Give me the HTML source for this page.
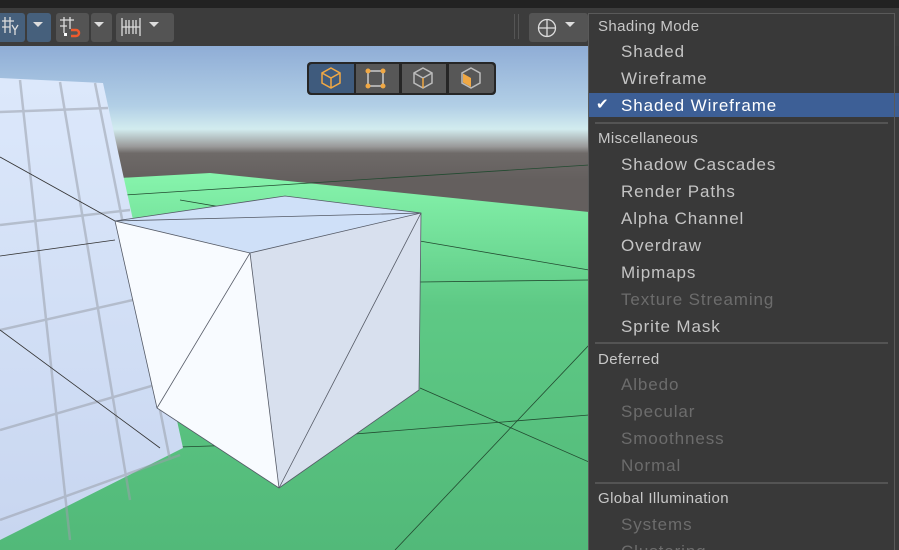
<!DOCTYPE html>
<html><head><meta charset="utf-8"><style>
*{margin:0;padding:0;box-sizing:border-box}
html,body{width:899px;height:550px;overflow:hidden}
body{background:#3c3c3c;position:relative;font-family:"Liberation Sans",sans-serif}
.abs{position:absolute}
.btn{position:absolute;top:13px;height:29px;border-radius:3px;background:#545454}
.menu{position:absolute;left:588px;top:13px;width:307px;height:537px;background:#393939;border:1px solid #5a5a5a;border-bottom:none;overflow:hidden}
.h{position:absolute;left:9px;font-size:15px;letter-spacing:0.4px;color:#c8c8c8;white-space:nowrap}
.i{position:absolute;left:32px;font-size:17px;letter-spacing:0.9px;color:#c4c4c4;white-space:nowrap}
.d{color:#6c6c6c}
.sep{position:absolute;left:6px;right:6px;height:2px;background:#545454}
</style></head><body>
<div class="abs" style="left:0;top:0;width:899px;height:8px;background:#222"></div>
<svg class="abs" style="left:0;top:46px" width="589" height="504" viewBox="0 46 589 504">
<defs>
<linearGradient id="sky" x1="0" y1="46" x2="0" y2="180" gradientUnits="userSpaceOnUse">
<stop offset="0" stop-color="#8fadd6"/><stop offset="0.45" stop-color="#b2cfe6"/><stop offset="0.62" stop-color="#d2ecef"/><stop offset="0.75" stop-color="#9a9a9a"/><stop offset="0.8" stop-color="#6e6a68"/><stop offset="1" stop-color="#645f5e"/></linearGradient>
<linearGradient id="gr" x1="0" y1="175" x2="0" y2="550" gradientUnits="userSpaceOnUse">
<stop offset="0" stop-color="#86f4ac"/><stop offset="0.35" stop-color="#5ec985"/><stop offset="1" stop-color="#52b979"/></linearGradient>
<linearGradient id="pl" x1="0" y1="80" x2="0" y2="540" gradientUnits="userSpaceOnUse">
<stop offset="0" stop-color="#dce8fb"/><stop offset="1" stop-color="#c8d6f0"/></linearGradient>
</defs>
<rect x="0" y="46" width="589" height="504" fill="url(#sky)"/>
<polygon points="120,178 210,173 589,212 589,550 0,550 0,200" fill="url(#gr)"/>
<g stroke="#224a30" stroke-width="0.8" fill="none">
<line x1="125" y1="195" x2="589" y2="165"/><line x1="180" y1="200" x2="589" y2="270"/><line x1="420" y1="282" x2="589" y2="280"/>
<line x1="420" y1="388" x2="589" y2="462"/><line x1="355" y1="434" x2="589" y2="415"/><line x1="395" y1="550" x2="589" y2="345"/>
<line x1="180" y1="447" x2="240" y2="445"/>
</g>
<polygon points="0,78 103,83 183,448 0,540" fill="url(#pl)"/>
<g stroke="#9aa0ab" stroke-width="2.5" opacity="0.55" fill="none">
<line x1="0" y1="112" x2="108" y2="108"/><line x1="0" y1="225" x2="130" y2="210"/><line x1="0" y1="330" x2="155" y2="295"/><line x1="0" y1="430" x2="172" y2="380"/><line x1="0" y1="520" x2="180" y2="455"/>
<line x1="20" y1="80" x2="70" y2="540"/><line x1="60" y1="82" x2="130" y2="500"/><line x1="95" y1="83" x2="170" y2="460"/>
</g>
<g stroke="#333" stroke-width="0.8" fill="none">
<line x1="0" y1="157" x2="115" y2="221"/><line x1="0" y1="330" x2="160" y2="448"/><line x1="0" y1="256" x2="115" y2="240"/>
</g>
<polygon points="115,221 285,196 421,213 419,390 279,488 157,408" fill="#eef4fb"/>
<polygon points="115,221 285,196 421,213 250,253" fill="#cfe0f8"/>
<polygon points="250,253 421,213 419,390 279,488" fill="#d8e0ee"/>
<polygon points="115,221 250,253 279,488 157,408" fill="#f8fbff"/>
<g stroke="#555a66" stroke-width="0.8" fill="none">
<polygon points="115,221 285,196 421,213 419,390 279,488 157,408"/>
<line x1="250" y1="253" x2="115" y2="221"/><line x1="250" y1="253" x2="421" y2="213"/><line x1="250" y1="253" x2="279" y2="488"/>
<line x1="250" y1="253" x2="157" y2="408"/><line x1="279" y1="488" x2="421" y2="213"/><line x1="115" y1="221" x2="421" y2="213"/>
</g>
</svg>
<div class="abs" style="left:307px;top:62px;width:189px;height:33px;background:#262626;border-radius:4px"></div>
<div class="abs" style="left:309px;top:64px;width:45px;height:29px;background:#3f5b7d;border-radius:3px 0 0 3px"></div>
<div class="abs" style="left:356px;top:64px;width:43px;height:29px;background:#575757"></div>
<div class="abs" style="left:402px;top:64px;width:44px;height:29px;background:#575757"></div>
<div class="abs" style="left:449px;top:64px;width:45px;height:29px;background:#575757;border-radius:0 3px 3px 0"></div>
<svg class="abs" style="left:307px;top:62px" width="189" height="33">
<g fill="none" stroke-width="1.5">
<path d="M24 6 L33 11 L33 21 L24 26 L15 21 L15 11 Z M15 11 L24 16 L33 11 M24 16 V26" stroke="#f0a844"/>
<rect x="61" y="9" width="15" height="15" stroke="#ccc"/>
<path d="M116 6 L125 11 L125 21 L116 26 L107 21 L107 11 Z M107 11 L116 16 L125 11" stroke="#bbb"/><path d="M116 16 V26" stroke="#f0a844"/>
<path d="M164 6 L173 11 L173 21 L164 26 L155 21 L155 11 Z" stroke="#bbb"/>
</g>
<g fill="#f0a844"><circle cx="61" cy="9" r="2.5"/><circle cx="76" cy="9" r="2.5"/><circle cx="61" cy="24" r="2.5"/><circle cx="76" cy="24" r="2.5"/></g>
<path d="M156 11.5 L164 16 V25 L156 20.5 Z" fill="#f0a844"/>
</svg>
<div class="btn" style="left:0;width:25px;background:#46607c;border-radius:0 3px 3px 0"></div>
<div class="btn" style="left:27px;width:24px;background:#46607c"></div>
<div class="btn" style="left:56px;width:33px"></div>
<div class="btn" style="left:91px;width:21px"></div>
<div class="btn" style="left:116px;width:58px"></div>
<div class="btn" style="left:529px;width:59px"></div>
<div class="abs" style="left:514px;top:14px;width:1px;height:25px;background:#555"></div>
<div class="abs" style="left:518px;top:14px;width:1px;height:25px;background:#555"></div>
<svg class="abs" style="left:0;top:8px" width="600" height="38">
<g fill="#ddd"><path d="M33 14h10l-5 5z"/><path d="M94 14h10l-5 5z"/><path d="M149 14h10l-5 5z"/><path d="M565 14h10l-5 5z"/></g>
<g stroke="#ddd" stroke-width="1.3" fill="none">
<path d="M2 13h12M2 19h8M5 9v16M10 9v16"/><path d="M12 17l3 5 3-5M15 22v5"/>
<path d="M60 12h14M60 18h7M64 9v16M70 9v12"/>
<path d="M122 10v18M126 12v14M129 12v14M133 12v14M136 12v14M140 10v18M122 19h18"/>
<circle cx="547" cy="20" r="8.5"/><path d="M547 11.5v17M539 20h17"/>
</g>
<path d="M71 22h5a3 3 0 0 1 0 6h-5" stroke="#ef5a2d" stroke-width="2.5" fill="none"/>
<rect x="64" y="25" width="3" height="3" fill="#fff"/>
</svg>
<div class="abs" style="left:895px;top:46px;width:4px;height:504px;background:#3a3a3a"></div>
<div class="abs" style="left:895px;top:93px;width:4px;height:24px;background:#3d5f96"></div>
<div class="menu">
<div class="h" style="top:4px">Shading Mode</div>
<div class="i" style="top:28px">Shaded</div>
<div class="i" style="top:55px">Wireframe</div>
<div class="abs" style="left:0;top:79px;width:305px;height:24px;background:#3d5f96"></div>
<div class="abs" style="left:7px;top:81px;color:#fff;font-size:15px">✔</div>
<div class="i" style="top:82px;color:#fff">Shaded Wireframe</div>
<div class="sep" style="top:108px"></div>
<div class="h" style="top:116px">Miscellaneous</div>
<div class="i" style="top:141px">Shadow Cascades</div>
<div class="i" style="top:168px">Render Paths</div>
<div class="i" style="top:195px">Alpha Channel</div>
<div class="i" style="top:222px">Overdraw</div>
<div class="i" style="top:249px">Mipmaps</div>
<div class="i d" style="top:276px">Texture Streaming</div>
<div class="i" style="top:303px">Sprite Mask</div>
<div class="sep" style="top:328px"></div>
<div class="h" style="top:337px">Deferred</div>
<div class="i d" style="top:361px">Albedo</div>
<div class="i d" style="top:388px">Specular</div>
<div class="i d" style="top:415px">Smoothness</div>
<div class="i d" style="top:442px">Normal</div>
<div class="sep" style="top:468px"></div>
<div class="h" style="top:476px">Global Illumination</div>
<div class="i d" style="top:501px">Systems</div>
<div class="i d" style="top:528px">Clustering</div>
</div>
</body></html>
